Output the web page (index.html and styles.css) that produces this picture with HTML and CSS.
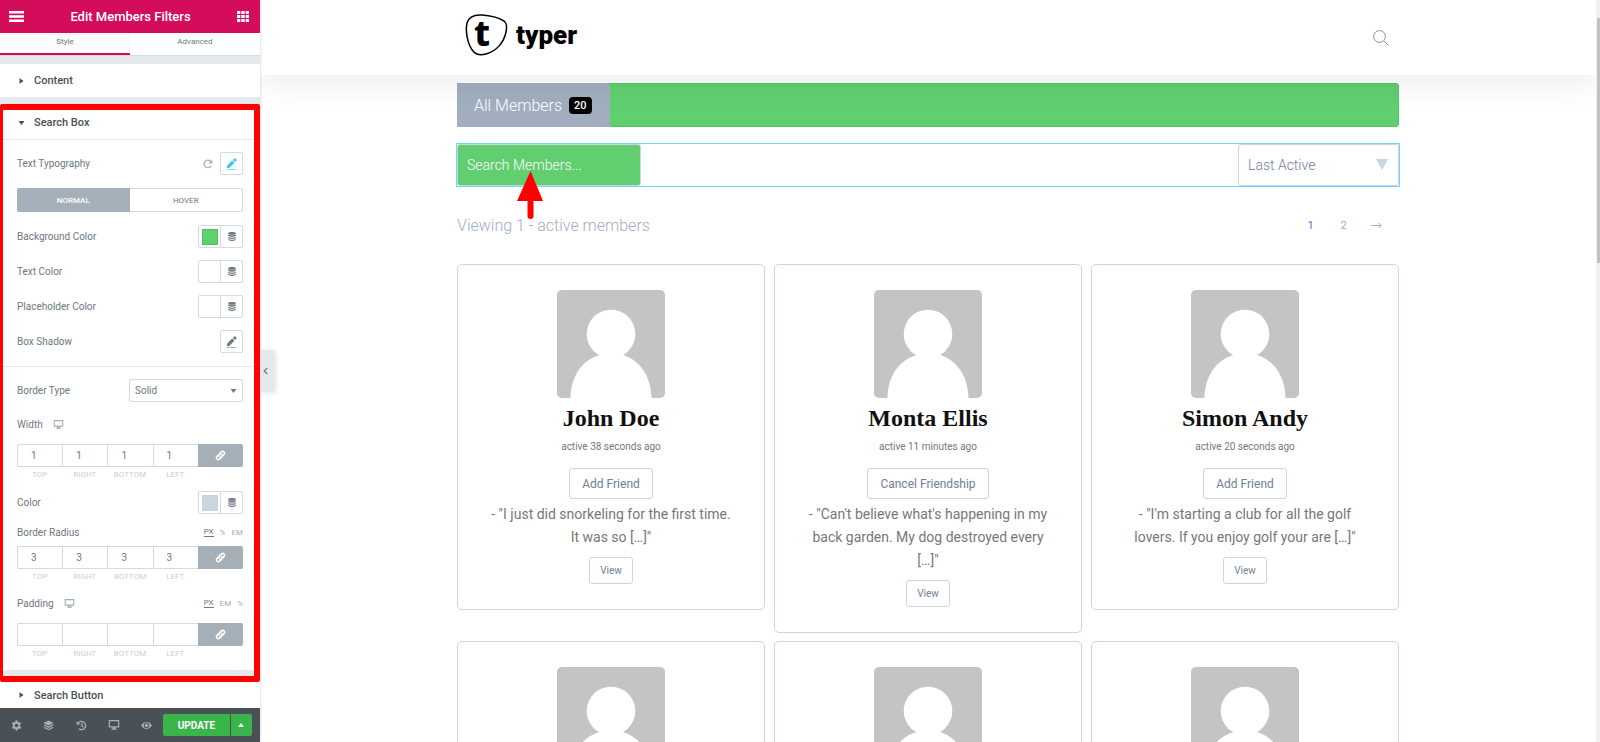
FILE: index.html
```html
<!DOCTYPE html>
<html lang="en">
<head>
    <meta charset="UTF-8">
    <meta name="viewport" content="width=device-width, initial-scale=1.0">
    <title>Edit Members Filters</title>
    <link rel="stylesheet" href="styles.css">
</head>
<body>
    <svg class="sprite" aria-hidden="true">
        <symbol id="i-menu" viewBox="0 0 15 11"><path d="M0 0h15v2.6H0zM0 4.2h15v2.6H0zM0 8.4h15V11H0z"/></symbol>
        <symbol id="i-grid" viewBox="0 0 12 11"><path d="M0 0h3.3v3H0zM4.3 0h3.4v3H4.3zM8.7 0H12v3H8.7zM0 4h3.3v3H0zM4.3 4h3.4v3H4.3zM8.7 4H12v3H8.7zM0 8h3.3v3H0zM4.3 8h3.4v3H4.3zM8.7 8H12v3H8.7z"/></symbol>
        <symbol id="i-right" viewBox="0 0 4 6"><path d="M0 0l4 3-4 3z"/></symbol>
        <symbol id="i-down" viewBox="0 0 6 4"><path d="M0 0h6L3 4z"/></symbol>
        <symbol id="i-up" viewBox="0 0 6 4"><path d="M0 4h6L3 0z"/></symbol>
        <symbol id="i-reset" viewBox="0 0 10 10"><path d="M8.2 6.8A3.8 3.8 0 1 1 7.6 2.2" fill="none" stroke="currentColor" stroke-width="1.3"/><path d="M9.3.5v4H5.4z"/></symbol>
        <symbol id="i-pencil" viewBox="0 0 11 12"><path d="M.8 10.2l.5-2.7L6.2 2.6l2.2 2.2-4.9 4.9zM6.9 1.9L8.3.5q.5-.5 1 0l1.1 1.1q.5.5 0 1L9.1 4.1z"/><path d="M1 11h9.5v1H1z" opacity=".6"/></symbol>
        <symbol id="i-db" viewBox="0 0 8 9"><ellipse cx="4" cy="1.4" rx="3.8" ry="1.4"/><path d="M.2 2.6Q4 4 7.8 2.6v1.5Q4 5.4.2 4.1zM.2 4.9Q4 6.2 7.8 4.9v1.3Q4 7.4.2 6.2zM.2 7Q4 8.3 7.8 7v1Q4 9.8.2 8z"/></symbol>
        <symbol id="i-desktop" viewBox="0 0 12 10"><path d="M1.3.7h9.4v6.1H1.3z" fill="none" stroke="currentColor" stroke-width="1.2"/><path d="M4.8 7h2.4l.5 1.7h1.1v1H3.2v-1h1.1z"/></symbol>
        <symbol id="i-link" viewBox="0 0 12 12"><g fill="none" stroke="currentColor" stroke-width="1.7" stroke-linecap="round"><path d="M5 7.2C3.8 6 4 5 4.800 4.200L7 2c1.900-1.500 4.500.8 3 2.800L8.600 6.200"/><path d="M7 4.800C8.200 6 8 7 7.200 7.800L5 10c-1.900 1.500-4.500-.8-3-2.800L3.400 5.800"/></g></symbol>
        <symbol id="i-gear" viewBox="0 0 12 12"><path fill-rule="evenodd" d="M4.900.5h2.200l.3 1.600 1 .6 1.500-.6L11 4 9.800 5.100v1.600L11 7.900 9.900 9.900l-1.500-.6-1 .6-.3 1.600H4.900l-.3-1.600-1-.6-1.500.6L1 7.900l1.200-1.200V5.100L1 4l1.100-1.900 1.500.6 1-.6zM6 4a2 2 0 1 0 0 4 2 2 0 0 0 0-4z"/></symbol>
        <symbol id="i-layers" viewBox="0 0 12 12"><path d="M6 .5l5.700 2.700L6 5.900.3 3.200zM1.900 5L6 7l4.100-2 1.600.8L6 8.600.3 5.800zM1.900 7.700L6 9.700l4.100-2 1.600.8L6 11.300.3 8.500z"/></symbol>
        <symbol id="i-history" viewBox="0 0 12 12"><path d="M2.200 3.300A4.600 4.600 0 1 1 3 9.600M6.300 3.400v3l1.900 1.200" fill="none" stroke="currentColor" stroke-width="1.400"/><path d="M.7 1.100v4h4z"/></symbol>
        <symbol id="i-eye" viewBox="0 0 12 10"><path fill-rule="evenodd" d="M0 5Q2.400 1.200 6 1.200T12 5Q9.600 8.800 6 8.800T0 5zm6-3a3 3 0 1 0 0 6 3 3 0 0 0 0-6z"/><circle cx="6" cy="5" r="1.900"/></symbol>
        <symbol id="i-chevron" viewBox="0 0 5 8"><path d="M4.200 1L1.200 4l3 3" fill="none" stroke="currentColor" stroke-width="1.200"/></symbol>
        <symbol id="i-avatar" viewBox="0 0 108 108"><path fill="#c4c4c4" d="M0 0h108v108H0z"/><circle cx="54" cy="44" r="24.300" fill="#fff"/><path fill="#fff" d="M13.500 108C14 84 27 69 43 65q11-3 23 0c16 5 28 20 28.500 43z"/></symbol>
    </svg>

    <aside class="panel">
        <header class="panel-header">
            <button aria-label="Menu"><svg width="15" height="11"><use href="#i-menu"/></svg></button>
            <h1>Edit Members Filters</h1>
            <button aria-label="Widgets"><svg width="12" height="11"><use href="#i-grid"/></svg></button>
        </header>
        <nav class="tabs">
            <a class="active" href="#">Style</a>
            <a href="#">Advanced</a>
        </nav>

        <div class="panel-body">
            <section class="section">
                <button class="section-title"><svg class="tri" width="4" height="6"><use href="#i-right"/></svg>Content</button>
            </section>

            <section class="section marked">
                <button class="section-title open"><svg class="tri" width="7" height="4"><use href="#i-down"/></svg>Search Box</button>
                <div class="controls">
                    <div class="row">
                        <span class="name">Text Typography</span>
                        <button class="reset" aria-label="Reset"><svg width="10" height="10"><use href="#i-reset"/></svg></button>
                        <button class="square blue" aria-label="Edit typography"><svg width="11" height="12"><use href="#i-pencil"/></svg></button>
                    </div>
                    <div class="toggle">
                        <button class="active">NORMAL</button>
                        <button>HOVER</button>
                    </div>
                    <div class="row">
                        <span class="name">Background Color</span>
                        <div class="picker"><button aria-label="Background color"><i class="swatch green"></i></button><button aria-label="Dynamic"><svg width="8" height="9"><use href="#i-db"/></svg></button></div>
                    </div>
                    <div class="row">
                        <span class="name">Text Color</span>
                        <div class="picker"><button aria-label="Text color"></button><button aria-label="Dynamic"><svg width="8" height="9"><use href="#i-db"/></svg></button></div>
                    </div>
                    <div class="row">
                        <span class="name">Placeholder Color</span>
                        <div class="picker"><button aria-label="Placeholder color"></button><button aria-label="Dynamic"><svg width="8" height="9"><use href="#i-db"/></svg></button></div>
                    </div>
                    <div class="row">
                        <span class="name">Box Shadow</span>
                        <button class="square" aria-label="Edit shadow"><svg width="11" height="12"><use href="#i-pencil"/></svg></button>
                    </div>
                    <hr>
                    <div class="row">
                        <label class="name" for="border-type">Border Type</label>
                        <div class="select">
                            <select id="border-type"><option>Solid</option></select>
                            <svg width="7" height="4"><use href="#i-down"/></svg>
                        </div>
                    </div>
                    <div class="label-row">
                        <span>Width</span>
                        <svg class="device" width="11" height="9"><use href="#i-desktop"/></svg>
                    </div>
                    <div class="dimensions">
                        <input id="w-top" type="text" value="1"><input id="w-right" type="text" value="1"><input id="w-bottom" type="text" value="1"><input id="w-left" type="text" value="1"><button aria-label="Link values"><svg width="11" height="11"><use href="#i-link"/></svg></button>
                        <label for="w-top">TOP</label><label for="w-right">RIGHT</label><label for="w-bottom">BOTTOM</label><label for="w-left">LEFT</label>
                    </div>
                    <div class="row tight">
                        <span class="name">Color</span>
                        <div class="picker"><button aria-label="Border color"><i class="swatch grey"></i></button><button aria-label="Dynamic"><svg width="8" height="9"><use href="#i-db"/></svg></button></div>
                    </div>
                    <div class="label-row close">
                        <span>Border Radius</span>
                        <div class="units"><button class="active">PX</button><button>%</button><button>EM</button></div>
                    </div>
                    <div class="dimensions">
                        <input id="r-top" type="text" value="3"><input id="r-right" type="text" value="3"><input id="r-bottom" type="text" value="3"><input id="r-left" type="text" value="3"><button aria-label="Link values"><svg width="11" height="11"><use href="#i-link"/></svg></button>
                        <label for="r-top">TOP</label><label for="r-right">RIGHT</label><label for="r-bottom">BOTTOM</label><label for="r-left">LEFT</label>
                    </div>
                    <div class="label-row">
                        <span>Padding</span>
                        <svg class="device" width="11" height="9"><use href="#i-desktop"/></svg>
                        <div class="units"><button class="active">PX</button><button>EM</button><button>%</button></div>
                    </div>
                    <div class="dimensions">
                        <input id="p-top" type="text"><input id="p-right" type="text"><input id="p-bottom" type="text"><input id="p-left" type="text"><button aria-label="Link values"><svg width="11" height="11"><use href="#i-link"/></svg></button>
                        <label for="p-top">TOP</label><label for="p-right">RIGHT</label><label for="p-bottom">BOTTOM</label><label for="p-left">LEFT</label>
                    </div>
                </div>
            </section>

            <section class="section">
                <button class="section-title"><svg class="tri" width="4" height="6"><use href="#i-right"/></svg>Search Button</button>
            </section>
        </div>

        <footer class="panel-footer">
            <button aria-label="Settings"><svg width="11" height="11"><use href="#i-gear"/></svg></button>
            <button aria-label="Navigator"><svg width="11" height="11"><use href="#i-layers"/></svg></button>
            <button aria-label="History"><svg width="11" height="11"><use href="#i-history"/></svg></button>
            <button aria-label="Responsive mode"><svg width="12" height="10"><use href="#i-desktop"/></svg></button>
            <button aria-label="Preview"><svg width="11" height="9"><use href="#i-eye"/></svg></button>
            <div class="publish">
                <button class="update">UPDATE</button>
                <button class="more" aria-label="Save options"><svg width="6" height="4"><use href="#i-up"/></svg></button>
            </div>
        </footer>
        <button class="collapse" aria-label="Hide panel"><svg width="5" height="8"><use href="#i-chevron"/></svg></button>
    </aside>

    <main class="preview">
        <header class="site-header">
            <div class="container">
                <a class="logo" href="#">
                    <span class="mark">
                        <svg width="44" height="43" viewBox="0 0 44 43"><path d="M3 10C5 3 11 1.500 18 2c9 .5 17 3 22 6 3 2 3 6 2 11-2 10-9 19-20 22-6 1.500-10 1-13-3C4 32 1 19 3 10z" fill="none" stroke="#000" stroke-width="1.500"/></svg>
                        <b>t</b>
                    </span>
                    <span class="word">typer</span>
                </a>
                <button class="find" aria-label="Search"><svg width="16" height="16" viewBox="0 0 16 16"><g fill="none" stroke="#8f8f8f"><circle cx="6.500" cy="6.500" r="5.900"/><path d="M10.800 10.800l4.700 4.700"/></g></svg></button>
            </div>
        </header>

        <div class="container">
            <nav class="members-nav"><a href="#">All Members <span class="count">20</span></a></nav>
            <form class="filters">
                <input type="text" placeholder="Search Members..." aria-label="Search Members">
                <div class="order">
                    <select aria-label="Order by"><option>Last Active</option></select>
                    <svg width="12" height="11" viewBox="0 0 12 11"><path d="M0 0h12L6 11z"/></svg>
                </div>
                <svg class="pointer" width="26" height="48" viewBox="0 0 26 48"><path d="M13.500 0L26 30h-9.500v15a3 3 0 0 1-6 0V30H0z" fill="#f00"/></svg>
            </form>
            <div class="summary">
                <p>Viewing 1 - active members</p>
                <nav class="pages">
                    <a class="current" href="#">1</a>
                    <a href="#">2</a>
                    <a href="#" aria-label="Next"><svg width="11" height="7" viewBox="0 0 11 7"><path d="M0 3.500h10M7.500 1L10 3.500 7.500 6" fill="none" stroke="currentColor"/></svg></a>
                </nav>
            </div>

            <div class="members">
                <article class="card">
                    <svg class="avatar"><use href="#i-avatar"/></svg>
                    <h2>John Doe</h2>
                    <p class="time">active 38 seconds ago</p>
                    <button class="friend">Add Friend</button>
                    <p class="bio">- "I just did snorkeling for the first time. It was so […]"</p>
                    <button class="view">View</button>
                </article>
                <article class="card">
                    <svg class="avatar"><use href="#i-avatar"/></svg>
                    <h2>Monta Ellis</h2>
                    <p class="time">active 11 minutes ago</p>
                    <button class="friend">Cancel Friendship</button>
                    <p class="bio">- "Can't believe what's happening in my back garden. My dog destroyed every […]"</p>
                    <button class="view">View</button>
                </article>
                <article class="card">
                    <svg class="avatar"><use href="#i-avatar"/></svg>
                    <h2>Simon Andy</h2>
                    <p class="time">active 20 seconds ago</p>
                    <button class="friend">Add Friend</button>
                    <p class="bio">- "I'm starting a club for all the golf lovers. If you enjoy golf your are […]"</p>
                    <button class="view">View</button>
                </article>
                <article class="card"><svg class="avatar"><use href="#i-avatar"/></svg></article>
                <article class="card"><svg class="avatar"><use href="#i-avatar"/></svg></article>
                <article class="card"><svg class="avatar"><use href="#i-avatar"/></svg></article>
            </div>
        </div>
    </main>
    <div class="scrollbar"><div class="thumb"></div></div>
</body>
</html>
```
FILE: styles.css
```css
* {
    box-sizing: border-box;
}
body {
    margin: 0;
    display: flex;
    height: 100vh;
    overflow: hidden;
    background: #fff;
    font-family: Roboto, "Liberation Sans", sans-serif;
}
h1, h2, p {
    margin: 0;
}
button, input, select {
    font: inherit;
    color: inherit;
    margin: 0;
    padding: 0;
    border: none;
    background: none;
    border-radius: 0;
    appearance: none;
    outline: none;
}
button {
    display: flex;
    align-items: center;
    justify-content: center;
    cursor: pointer;
}
a {
    color: inherit;
    text-decoration: none;
}
svg {
    display: block;
    fill: currentColor;
    flex-shrink: 0;
}
.sprite {
    position: absolute;
    width: 0;
    height: 0;
}

/* editor panel */
.panel {
    position: relative;
    z-index: 5;
    width: 260px;
    flex-shrink: 0;
    display: flex;
    flex-direction: column;
    background: #e6e9ec;
    color: #6d7882;
    font-size: 10px;
    box-shadow: 0 0 3px rgba(0, 0, 0, 0.2);
}
.panel-header {
    display: flex;
    align-items: center;
    justify-content: space-between;
    height: 33px;
    flex-shrink: 0;
    padding: 0 11px 0 9px;
    background: #d30c5c;
    color: #fff;
}
.panel-header h1 {
    font-size: 13px;
    font-weight: 500;
}
.tabs {
    display: flex;
    flex-shrink: 0;
    height: 23px;
    background: #fff;
    font-size: 8px;
    text-align: center;
    line-height: 18px;
    border-bottom: 1px solid #d5dadf;
}
.tabs a {
    flex: 1;
}
.tabs .active {
    background: #fbfbfb;
    border-bottom: 2px solid #d30c5c;
}
.panel-body {
    flex: 1;
    min-height: 0;
    overflow: hidden;
    display: flex;
    flex-direction: column;
    gap: 7px;
    padding-top: 8px;
}
.section {
    flex-shrink: 0;
    background: #fff;
}
.section-title {
    width: 100%;
    height: 33px;
    justify-content: flex-start;
    padding-left: 17px;
    font-size: 11px;
    font-weight: 500;
    color: #495157;
}
.section-title.open {
    height: 36px;
    padding-top: 2px;
    border-bottom: 1px solid #e6e9ec;
}
.section:last-child .section-title {
    height: 36px;
}
.tri {
    width: 9px;
    margin-right: 8px;
}
.marked {
    position: relative;
}
.marked::after {
    content: "";
    position: absolute;
    top: 0;
    right: 0;
    bottom: -12px;
    left: 0;
    border: 6px solid #f00;
    border-left-width: 3px;
    border-radius: 2px;
    pointer-events: none;
}
.controls {
    padding: 0 17px 10px;
}
.row {
    display: flex;
    align-items: center;
    height: 23px;
    margin-top: 12px;
}
.row.tight {
    margin-top: 10px;
}
.name {
    flex: 1;
}
.reset {
    margin-right: 7px;
    color: #a4afb7;
}
.square {
    width: 23px;
    height: 23px;
    border: 1px solid #d5dadf;
    border-radius: 2px;
}
.square.blue {
    color: #39c5ef;
}
.toggle {
    display: flex;
    height: 24px;
    margin: 13px 0;
    border: 1px solid #d5dadf;
    border-radius: 2px;
    font-size: 8px;
}
.toggle button {
    flex: 1;
}
.toggle .active {
    margin: -1px 0 -1px -1px;
    background: #a4afb7;
    color: #fff;
    font-weight: 500;
    border-radius: 2px 0 0 2px;
}
.picker {
    display: flex;
    border: 1px solid #d5dadf;
    border-radius: 2px;
}
.picker button {
    width: 21px;
    height: 21px;
}
.picker button + button {
    width: 22px;
    border-left: 1px solid #d5dadf;
}
.swatch {
    width: 16px;
    height: 16px;
}
.swatch.green {
    background: #61ce70;
    border: 1px solid #4fbf60;
}
.swatch.grey {
    background: #cbd5e0;
}
hr {
    margin: 13px -17px 0;
    border: none;
    border-top: 1px solid #e6e9ec;
}
.select {
    position: relative;
    width: 114px;
}
.select select {
    width: 100%;
    height: 23px;
    padding-left: 5px;
    border: 1px solid #d5dadf;
    border-radius: 2px;
}
.select svg {
    position: absolute;
    right: 6px;
    top: 10px;
    pointer-events: none;
}
.label-row {
    display: flex;
    align-items: center;
    height: 20px;
    margin: 12px 0 10px;
}
.label-row.close {
    margin: 8px 0 4px;
}
.dimensions + .label-row {
    margin-top: 10px;
}
.device {
    margin-left: 10px;
    color: #a4afb7;
}
.units {
    display: flex;
    gap: 6px;
    margin-left: auto;
    font-size: 8px;
    color: #a4afb7;
}
.units .active {
    color: #6d7882;
    border-bottom: 1px solid #6d7882;
}
.dimensions {
    display: grid;
    grid-template-columns: repeat(5, 1fr);
    row-gap: 2px;
}
.dimensions input {
    min-width: 0;
    height: 23px;
    padding-left: 13px;
    border: 1px solid #d5dadf;
    border-right: none;
}
.dimensions input:first-child {
    border-radius: 2px 0 0 2px;
}
.dimensions button {
    background: #a4afb7;
    color: #fff;
    border-radius: 0 2px 2px 0;
}
.dimensions label {
    font-size: 8px;
    line-height: 12px;
    text-align: center;
    color: #c9cfd5;
}
.panel-footer {
    display: flex;
    align-items: center;
    flex-shrink: 0;
    height: 34px;
    padding-right: 8px;
    background: #495157;
    color: #a4afb7;
}
.panel-footer > button {
    flex: 1;
    height: 34px;
}
.publish {
    display: flex;
    gap: 1px;
    color: #fff;
}
.publish button {
    height: 22px;
    background: #39b54a;
}
.publish .update {
    width: 67px;
    font-size: 10px;
    font-weight: 700;
    border-radius: 2px 0 0 2px;
}
.publish .more {
    width: 21px;
    border-radius: 0 2px 2px 0;
}
.collapse {
    position: absolute;
    left: 100%;
    top: 350px;
    width: 14px;
    height: 42px;
    padding-right: 4px;
    background: #e6e9ec;
    border-radius: 0 2px 2px 0;
    box-shadow: 2px 1px 5px rgba(0, 0, 0, 0.12);
}

/* site preview */
.preview {
    flex: 1;
    min-width: 0;
    overflow: hidden;
}
.container {
    max-width: 942px;
    margin: 0 auto;
}
.site-header {
    position: relative;
    z-index: 1;
    background: #fff;
    box-shadow: 0 10px 30px rgba(0, 0, 0, 0.07);
}
.site-header .container {
    display: flex;
    align-items: center;
    justify-content: space-between;
    height: 75px;
    padding: 0 10px 0 7px;
}
.logo {
    display: flex;
    align-items: center;
    gap: 8px;
    height: 69px;
    margin-bottom: 6px;
    color: #000;
}
.mark {
    position: relative;
}
.mark b {
    position: absolute;
    inset: 0;
    padding-right: 8px;
    font-family: "Noto Sans", sans-serif;
    font-size: 36px;
    font-weight: 800;
    line-height: 40px;
    text-align: center;
}
.word {
    font-size: 26px;
    font-weight: 900;
    line-height: 40px;
}
.members-nav {
    display: flex;
    height: 44px;
    margin-top: 8px;
    background: #61ce70;
    border: 1px solid #54c765;
    border-radius: 3px;
}
.members-nav a {
    display: flex;
    align-items: center;
    gap: 7px;
    margin: -1px;
    padding: 0 18px 0 17px;
    background: #a0aec0;
    color: #fff;
    font-size: 16px;
    font-weight: 300;
}
.count {
    padding: 0 5px;
    background: #000;
    border-radius: 4px;
    font-size: 11px;
    font-weight: 500;
    line-height: 17px;
}
.filters {
    position: relative;
    display: flex;
    justify-content: space-between;
    margin-top: 17px;
    height: 42px;
    outline: 1px solid #71d7f7;
}
.filters input {
    width: 184px;
    padding: 0 9px;
    background: #61ce70;
    border: 1px solid #cbd5e0;
    border-radius: 3px;
    color: #fff;
    font-size: 14px;
    font-weight: 300;
}
.filters input::placeholder {
    color: #fff;
}
.order {
    position: relative;
    width: 161px;
    color: #718096;
}
.order select {
    width: 100%;
    height: 100%;
    padding-left: 9px;
    border: 1px solid #cbd5e0;
    border-radius: 3px;
    font-size: 14px;
    font-weight: 300;
}
.order svg {
    position: absolute;
    right: 11px;
    top: 15px;
    color: #cbd5e0;
    pointer-events: none;
}
.pointer {
    position: absolute;
    left: 60px;
    top: 27px;
    z-index: 2;
}
.summary {
    display: flex;
    align-items: center;
    justify-content: space-between;
    height: 78px;
    color: #a0aec0;
    font-size: 16px;
    font-weight: 300;
}
.pages {
    display: flex;
    align-items: center;
    padding-right: 6px;
    font-size: 11px;
    font-weight: 400;
}
.pages a {
    display: flex;
    justify-content: center;
    width: 33px;
}
.pages .current {
    color: #3182ce;
}
.members {
    display: grid;
    grid-template-columns: repeat(3, 1fr);
    gap: 8px 9px;
    align-items: start;
}
.card {
    display: flex;
    flex-direction: column;
    align-items: center;
    padding: 25px 28px;
    border: 1px solid #cbd5e0;
    border-radius: 5px;
    text-align: center;
    color: #718096;
}
.avatar {
    width: 108px;
    height: 108px;
    border-radius: 5px;
}
.card h2 {
    margin-top: 4px;
    color: #111;
    font-family: "Liberation Serif", serif;
    font-size: 24px;
    line-height: 32px;
}
.time {
    margin: 5px 0 13px;
    color: #777;
    font-size: 10px;
    line-height: 16px;
}
.friend, .view {
    border: 1px solid #cbd5e0;
    border-radius: 3px;
}
.friend {
    height: 31px;
    padding: 0 12px;
    font-size: 12px;
}
.bio {
    margin: 4px 0 8px;
    color: #777;
    font-size: 14px;
    line-height: 23px;
}
.view {
    width: 44px;
    height: 27px;
    font-size: 10px;
}

.scrollbar {
    width: 4px;
    padding-top: 18px;
    background: #f1f1f1;
}
.thumb {
    height: 245px;
    margin-left: 1px;
    background: #c1c1c1;
}
```
